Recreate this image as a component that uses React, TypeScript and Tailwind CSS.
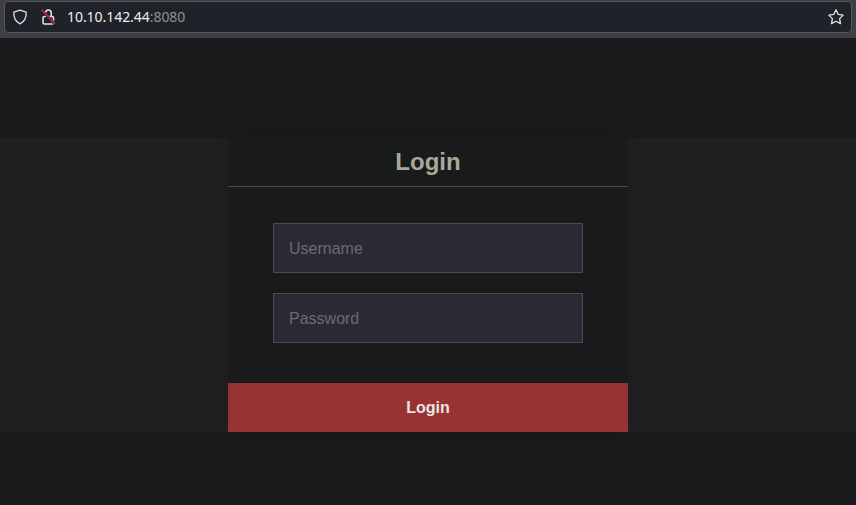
export default function App() {
  return (
    <div className="h-[505px] w-[856px] overflow-hidden bg-[#181a1b] flex flex-col font-['Liberation_Sans',sans-serif]">
      <div className="h-[38px] shrink-0 bg-[#3d3d42] px-[4px] pt-[1px]">
        <div className="h-[32px] rounded-[4px] border border-[#58585e] bg-[#1f2229] flex items-center font-['Noto_Sans',sans-serif] text-[14px] tracking-[-0.05px]">
          <svg className="ml-[7px]" width="16" height="16" viewBox="0 0 16 16" fill="none" stroke="#e0e0e2" strokeWidth="1.300" strokeLinejoin="round">
            <path d="M8 1.200 14.200 3.200c.2 5.600-1.600 9.400-6.200 11.600C3.400 12.600 1.600 8.800 1.800 3.200Z" />
          </svg>
          <svg className="ml-[12px]" width="16" height="16" viewBox="0 0 16 16" fill="none">
            <path d="M5.600 7.500V3.800a2.800 2.800 0 0 1 5.600 0V7.500" stroke="#e8e8ea" strokeWidth="1.500" />
            <rect x="3" y="7.500" width="10.500" height="7.500" rx="1.300" stroke="#e8e8ea" strokeWidth="1.500" />
            <path d="M2 1.500 15 15" stroke="#1f2229" strokeWidth="3" />
            <path d="M1.500 .5 15 15" stroke="#c8264f" strokeWidth="1.700" />
          </svg>
          <span className="ml-[11px] -mt-[2px] text-[#eeeef0]">10.10.142.44</span>
          <span className="-mt-[2px] text-[#8f8f94]">:8080</span>
          <svg className="ml-auto mr-[6px]" width="18" height="18" viewBox="0 0 18 18" fill="none" stroke="#e0e0e2" strokeWidth="1.300" strokeLinejoin="round">
            <path d="M9 1.800 11.200 6.400 16.200 7.100 12.600 10.600 13.500 15.600 9 13.200 4.500 15.600 5.400 10.600 1.800 7.100 6.800 6.400Z" />
          </svg>
        </div>
      </div>
      <div className="mt-[100px] h-[294px] shrink-0 bg-[#1e2021] flex justify-center">
        <div className="w-[400px] h-full bg-[#181a1b] shadow-[0_0_20px_rgba(0,0,0,0.1)] flex flex-col">
          <h1 className="h-[49px] shrink-0 border-b border-[#4a4d4f] text-center text-[24px] leading-[48px] font-bold text-[#aca79d]">Login</h1>
          <div className="flex-1 flex flex-col items-center pt-[36px] gap-[20px]">
            <input placeholder="Username" className="w-[310px] h-[50px] border border-[#4a4d50] bg-[#2a2a34] px-[15px] pt-[2px] text-[16px] text-[#ccc] outline-none placeholder:text-[#6b6b70]" />
            <input placeholder="Password" className="w-[310px] h-[50px] border border-[#4a4d50] bg-[#2a2a34] px-[15px] pt-[2px] text-[16px] text-[#ccc] outline-none placeholder:text-[#6b6b70]" />
          </div>
          <button className="h-[49px] shrink-0 bg-[#993333] text-[16px] font-bold text-[#e8e6e3]">Login</button>
        </div>
      </div>
    </div>
  );
}
